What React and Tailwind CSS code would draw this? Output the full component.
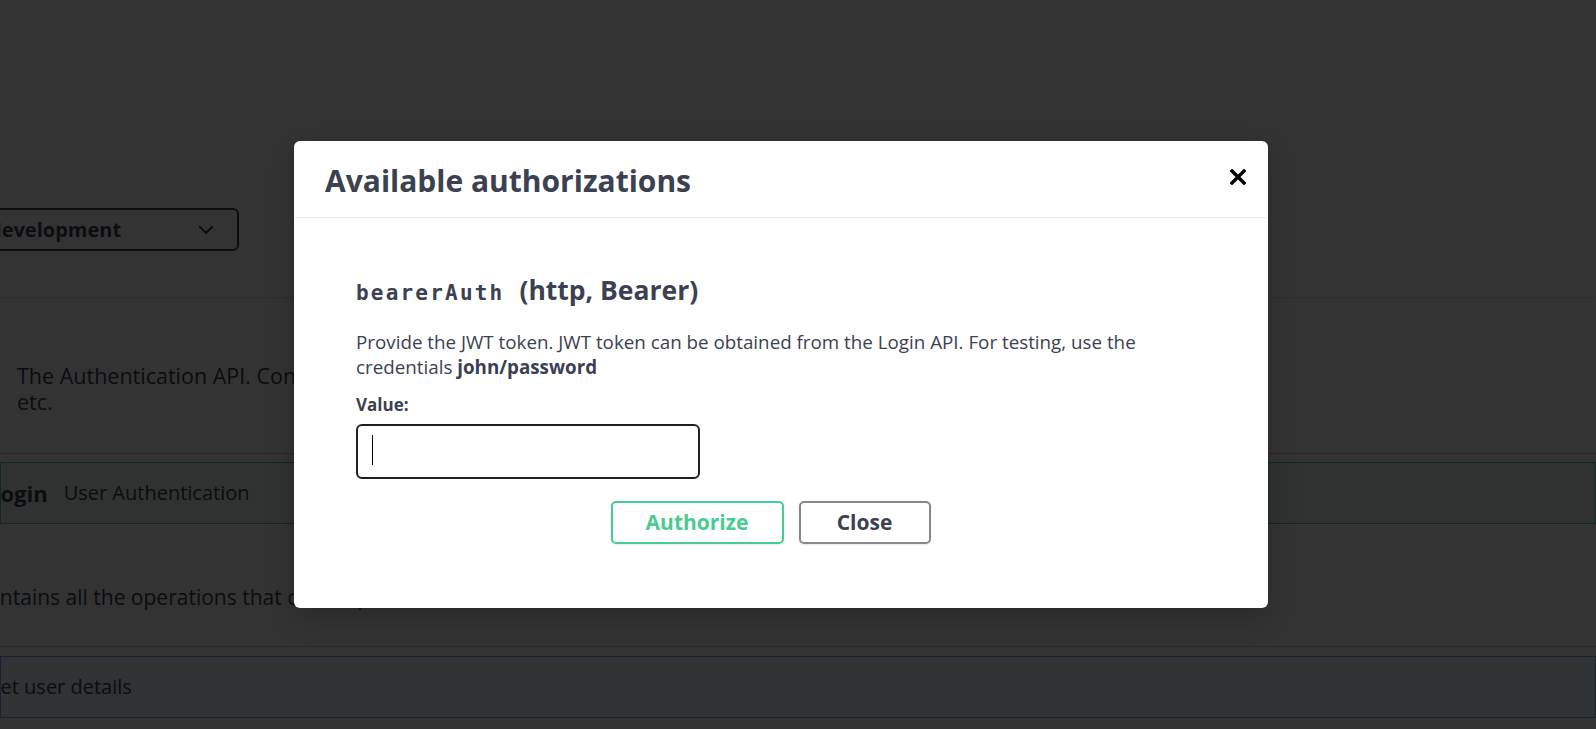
import React from "react";

const sans = { fontFamily: '"Open Sans", "Noto Sans", sans-serif' };

function Chevron() {
  return (
    <svg width="14" height="8" viewBox="0 0 14 8" fill="none">
      <path d="M1 1l6 6 6-6" stroke="#3b4151" strokeWidth="2" strokeLinecap="round" strokeLinejoin="round" />
    </svg>
  );
}

function CloseX() {
  return (
    <svg width="16" height="16" viewBox="0 0 16 16" fill="none">
      <path d="M2 2L14 14M14 2L2 14" stroke="#000" strokeWidth="3.4" strokeLinecap="square" />
    </svg>
  );
}

function Background() {
  return (
    <div className="flex flex-col w-[1596px] h-[729px] bg-white text-[#3b4151] overflow-hidden">
      {/* scheme container */}
      <div className="h-[297px] shrink-0 pt-[208px] bg-white shadow-[0_1px_2px_0_rgba(0,0,0,0.15)]">
        <div className="ml-[-40px] w-[279px] h-[43px] border-2 border-[#41444e] rounded-[6px] flex items-center justify-between pl-[27px] pr-[24px]">
          <span className="text-[20px] font-bold">development</span>
          <Chevron />
        </div>
      </div>
      {/* tag description */}
      <div className="h-[157px] shrink-0 border-b border-[rgba(59,65,81,0.3)] pt-[66px] pl-[17px]">
        <p className="text-[21.5px] leading-[26px] whitespace-nowrap">
          The Authentication API. Contains the operations for login, token issuing and refreshing,
          <br />
          etc.
        </p>
      </div>
      {/* post block */}
      <div className="mt-[8px] h-[62px] shrink-0 border border-[#49cc90] bg-[rgba(73,204,144,0.1)] flex items-center">
        <span className="ml-[-13px] text-[22px] font-bold">Login</span>
        <span className="ml-[16px] text-[20px]">User Authentication</span>
      </div>
      {/* tag description 2 */}
      <div className="h-[123px] shrink-0 border-b border-[rgba(59,65,81,0.3)] pt-[60px]">
        <p className="ml-[-26px] text-[21px] leading-[26px] whitespace-nowrap">
          Contains all the operations that can be performed on a user account
        </p>
      </div>
      {/* get block */}
      <div className="mt-[9px] h-[62px] shrink-0 border border-[#61affe] bg-[rgba(97,175,254,0.1)] flex items-center">
        <span className="ml-[-15px] text-[20px]">Get user details</span>
      </div>
    </div>
  );
}

export default function App() {
  return (
    <div className="relative w-[1596px] h-[729px] overflow-hidden" style={sans}>
      <Background />
      <div className="absolute inset-0 z-20 bg-black/80" />
      <div className="absolute z-30 left-[294px] top-[141px] w-[974px] bg-white rounded-[6px] shadow-[0_10px_30px_0_rgba(0,0,0,0.2)] text-[#3b4151]">
        <div className="h-[77px] border-b border-[#ebebeb] flex items-center justify-between pl-[31px] pr-[22px]">
          <h3 className="text-[30px] font-bold leading-none mt-[4px]">Available authorizations</h3>
          <button className="w-[16px] h-[16px] mb-[5px] flex items-center justify-center">
            <CloseX />
          </button>
        </div>
        <div className="pl-[62px] pr-[62px] pt-[58px] pb-[64px]">
          <h4 className="leading-[28px] whitespace-nowrap">
            <code
              className="text-[21px] font-bold tracking-[2.2px]"
              style={{ fontFamily: '"DejaVu Sans Mono", "Liberation Mono", monospace' }}
            >
              bearerAuth
            </code>
            <span className="ml-[15px] text-[26.5px] font-bold">(http, Bearer)</span>
          </h4>
          <p className="mt-[22px] text-[18.8px] leading-[25px]">
            Provide the JWT token. JWT token can be obtained from the Login API. For testing, use the
            credentials <b>john/password</b>
          </p>
          <label className="block mt-[13px] text-[17px] leading-[24px] font-bold">Value:</label>
          <div className="relative mt-[7px] w-[344px] h-[55px]">
            <input
              type="text"
              className="w-full h-full border-2 border-[#1f1f1f] rounded-[6px] outline-none px-[16px] text-[18px]"
              style={sans}
            />
            <span className="absolute left-[16px] top-[11px] w-[1px] h-[30px] bg-black pointer-events-none" />
          </div>
          <div className="mt-[22px] flex justify-center pr-[21px] -ml-[62px] -mr-[62px]">
            <button className="w-[173px] h-[43px] border-2 border-[#49cc90] rounded-[5px] text-[#49cc90] text-[21px] font-bold shadow-[0_1px_2px_rgba(0,0,0,0.1)] mr-[15px]">
              Authorize
            </button>
            <button className="w-[132px] h-[43px] border-2 border-[#888] rounded-[5px] text-[#3b4151] text-[21px] font-bold shadow-[0_1px_2px_rgba(0,0,0,0.1)]">
              Close
            </button>
          </div>
        </div>
      </div>
    </div>
  );
}
